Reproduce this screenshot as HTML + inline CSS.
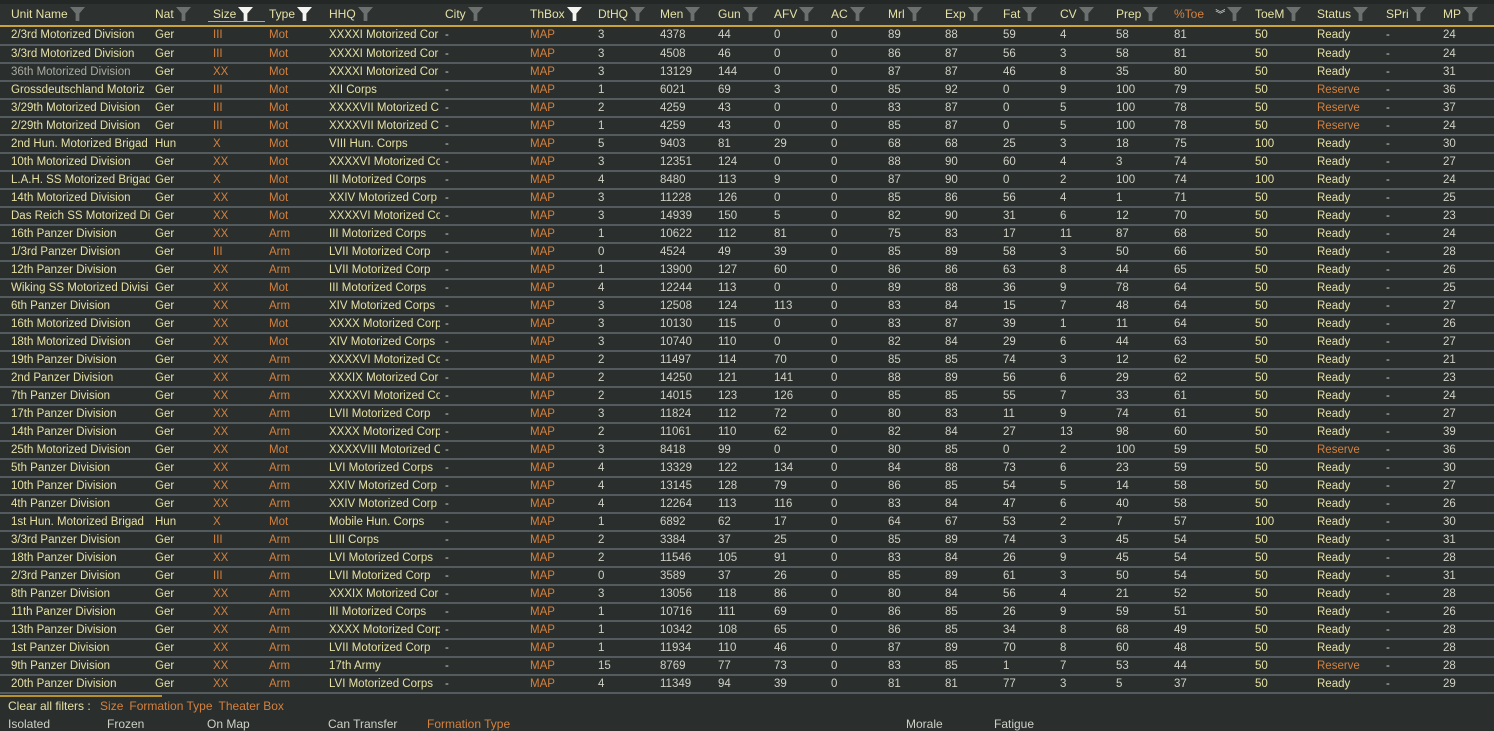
<!DOCTYPE html>
<html><head><meta charset="utf-8">
<style>
*{margin:0;padding:0;box-sizing:border-box}
body{width:1494px;height:730px;overflow:hidden;background:#2a2f2d;font-family:"Liberation Sans",sans-serif;font-size:11.5px;color:#cfd0c6;position:relative}
.top{position:absolute;left:0;top:0;width:1494px;height:5px;background:#232725}
.hdr{position:absolute;left:0;top:4px;width:1494px;height:22px;background:#2d3230}
.gold{position:absolute;left:0;top:25px;width:1494px;height:2px;background:#c9a23a}
.h{position:absolute;top:6px;color:#e6e0a6;font-size:12px;white-space:nowrap}
.h svg{vertical-align:-3px;margin-left:2px}
table{position:absolute;left:0;top:27px;border-collapse:collapse;table-layout:fixed;width:1494px}
td{height:18px;border-bottom:2px solid #535b5e;padding:0 0 0 5px;white-space:nowrap;overflow:hidden;line-height:16px;vertical-align:top}
td:first-child{padding-left:11px;color:#e6e0a6}
td:nth-child(2),td:nth-child(5),td:nth-child(19),td:nth-child(20){color:#e6e0a6}
td:nth-child(3),td:nth-child(4),td:nth-child(7){color:#d4803e}
td.r{color:#d4803e!important}
tr.g td:first-child{color:#a9aaa2}
.foot{position:absolute;left:0;top:695px;width:162px;height:2px;background:#b8902c}
.f1{position:absolute;top:699px;left:8px;color:#e6e0a6;font-size:12px;white-space:nowrap}
.f1 span{color:#d4803e;margin-left:6px}
.f2{position:absolute;top:717px;color:#cfd0c6;font-size:12px;white-space:nowrap}
</style></head><body>
<div class="top"></div><div class="hdr"></div>
<svg width="0" height="0" style="position:absolute"><defs>
<symbol id="fg" viewBox="0 0 16 16"><polygon points="0,1 16,1 10,8 10,16 6,16 6,8" fill="#6c7170"/></symbol>
<symbol id="fw" viewBox="0 0 16 16"><polygon points="0,1 16,1 10,8 10,16 6,16 6,8" fill="#f4f4f0"/></symbol>
</defs></svg>
<div class="h" style="left:11px">Unit Name<svg width="15" height="15"><use href="#fg"/></svg></div>
<div class="h" style="left:155px">Nat<svg width="15" height="15"><use href="#fg"/></svg></div>
<div class="h" style="left:213px">Size<svg width="15" height="15"><use href="#fw"/></svg></div>
<div style="position:absolute;left:208px;top:21px;width:57px;height:1px;background:#8fb0c8"></div>
<div class="h" style="left:269px">Type<svg width="15" height="15"><use href="#fw"/></svg></div>
<div class="h" style="left:329px">HHQ<svg width="15" height="15"><use href="#fg"/></svg></div>
<div class="h" style="left:445px">City<svg width="15" height="15"><use href="#fg"/></svg></div>
<div class="h" style="left:530px">ThBox<svg width="15" height="15"><use href="#fw"/></svg></div>
<div class="h" style="left:598px">DtHQ<svg width="15" height="15"><use href="#fg"/></svg></div>
<div class="h" style="left:660px">Men<svg width="15" height="15"><use href="#fg"/></svg></div>
<div class="h" style="left:718px">Gun<svg width="15" height="15"><use href="#fg"/></svg></div>
<div class="h" style="left:774px">AFV<svg width="15" height="15"><use href="#fg"/></svg></div>
<div class="h" style="left:831px">AC<svg width="15" height="15"><use href="#fg"/></svg></div>
<div class="h" style="left:888px">Mrl<svg width="15" height="15"><use href="#fg"/></svg></div>
<div class="h" style="left:945px">Exp<svg width="15" height="15"><use href="#fg"/></svg></div>
<div class="h" style="left:1003px">Fat<svg width="15" height="15"><use href="#fg"/></svg></div>
<div class="h" style="left:1060px">CV<svg width="15" height="15"><use href="#fg"/></svg></div>
<div class="h" style="left:1116px">Prep<svg width="15" height="15"><use href="#fg"/></svg></div>
<div class="h" style="left:1174px;color:#d4803e">%Toe <span style="color:#eee;font-size:10px;margin-left:8px">︾</span><svg width="15" height="15"><use href="#fg"/></svg></div>
<div class="h" style="left:1255px">ToeM<svg width="15" height="15"><use href="#fg"/></svg></div>
<div class="h" style="left:1317px">Status<svg width="15" height="15"><use href="#fg"/></svg></div>
<div class="h" style="left:1386px">SPri<svg width="15" height="15"><use href="#fg"/></svg></div>
<div class="h" style="left:1443px">MP<svg width="15" height="15"><use href="#fg"/></svg></div>
<div class="gold"></div>
<table>
<colgroup><col style="width:150px"><col style="width:58px"><col style="width:56px"><col style="width:60px"><col style="width:116px"><col style="width:85px"><col style="width:68px"><col style="width:62px"><col style="width:58px"><col style="width:56px"><col style="width:57px"><col style="width:57px"><col style="width:57px"><col style="width:58px"><col style="width:57px"><col style="width:56px"><col style="width:58px"><col style="width:81px"><col style="width:62px"><col style="width:69px"><col style="width:57px"><col style="width:56px"></colgroup>
<tr><td>2/3rd Motorized Division</td><td>Ger</td><td>III</td><td>Mot</td><td>XXXXI Motorized Cor</td><td>-</td><td>MAP</td><td>3</td><td>4378</td><td>44</td><td>0</td><td>0</td><td>89</td><td>88</td><td>59</td><td>4</td><td>58</td><td>81</td><td>50</td><td>Ready</td><td>-</td><td>24</td></tr>
<tr><td>3/3rd Motorized Division</td><td>Ger</td><td>III</td><td>Mot</td><td>XXXXI Motorized Cor</td><td>-</td><td>MAP</td><td>3</td><td>4508</td><td>46</td><td>0</td><td>0</td><td>86</td><td>87</td><td>56</td><td>3</td><td>58</td><td>81</td><td>50</td><td>Ready</td><td>-</td><td>24</td></tr>
<tr class="g"><td>36th Motorized Division</td><td>Ger</td><td>XX</td><td>Mot</td><td>XXXXI Motorized Cor</td><td>-</td><td>MAP</td><td>3</td><td>13129</td><td>144</td><td>0</td><td>0</td><td>87</td><td>87</td><td>46</td><td>8</td><td>35</td><td>80</td><td>50</td><td>Ready</td><td>-</td><td>31</td></tr>
<tr><td>Grossdeutschland Motoriz</td><td>Ger</td><td>III</td><td>Mot</td><td>XII Corps</td><td>-</td><td>MAP</td><td>1</td><td>6021</td><td>69</td><td>3</td><td>0</td><td>85</td><td>92</td><td>0</td><td>9</td><td>100</td><td>79</td><td>50</td><td class="r">Reserve</td><td>-</td><td>36</td></tr>
<tr><td>3/29th Motorized Division</td><td>Ger</td><td>III</td><td>Mot</td><td>XXXXVII Motorized C</td><td>-</td><td>MAP</td><td>2</td><td>4259</td><td>43</td><td>0</td><td>0</td><td>83</td><td>87</td><td>0</td><td>5</td><td>100</td><td>78</td><td>50</td><td class="r">Reserve</td><td>-</td><td>37</td></tr>
<tr><td>2/29th Motorized Division</td><td>Ger</td><td>III</td><td>Mot</td><td>XXXXVII Motorized C</td><td>-</td><td>MAP</td><td>1</td><td>4259</td><td>43</td><td>0</td><td>0</td><td>85</td><td>87</td><td>0</td><td>5</td><td>100</td><td>78</td><td>50</td><td class="r">Reserve</td><td>-</td><td>24</td></tr>
<tr><td>2nd Hun. Motorized Brigad</td><td>Hun</td><td>X</td><td>Mot</td><td>VIII Hun. Corps</td><td>-</td><td>MAP</td><td>5</td><td>9403</td><td>81</td><td>29</td><td>0</td><td>68</td><td>68</td><td>25</td><td>3</td><td>18</td><td>75</td><td>100</td><td>Ready</td><td>-</td><td>30</td></tr>
<tr><td>10th Motorized Division</td><td>Ger</td><td>XX</td><td>Mot</td><td>XXXXVI Motorized Co</td><td>-</td><td>MAP</td><td>3</td><td>12351</td><td>124</td><td>0</td><td>0</td><td>88</td><td>90</td><td>60</td><td>4</td><td>3</td><td>74</td><td>50</td><td>Ready</td><td>-</td><td>27</td></tr>
<tr><td>L.A.H. SS Motorized Brigad</td><td>Ger</td><td>X</td><td>Mot</td><td>III Motorized Corps</td><td>-</td><td>MAP</td><td>4</td><td>8480</td><td>113</td><td>9</td><td>0</td><td>87</td><td>90</td><td>0</td><td>2</td><td>100</td><td>74</td><td>100</td><td>Ready</td><td>-</td><td>24</td></tr>
<tr><td>14th Motorized Division</td><td>Ger</td><td>XX</td><td>Mot</td><td>XXIV Motorized Corp</td><td>-</td><td>MAP</td><td>3</td><td>11228</td><td>126</td><td>0</td><td>0</td><td>85</td><td>86</td><td>56</td><td>4</td><td>1</td><td>71</td><td>50</td><td>Ready</td><td>-</td><td>25</td></tr>
<tr><td>Das Reich SS Motorized Di</td><td>Ger</td><td>XX</td><td>Mot</td><td>XXXXVI Motorized Co</td><td>-</td><td>MAP</td><td>3</td><td>14939</td><td>150</td><td>5</td><td>0</td><td>82</td><td>90</td><td>31</td><td>6</td><td>12</td><td>70</td><td>50</td><td>Ready</td><td>-</td><td>23</td></tr>
<tr><td>16th Panzer Division</td><td>Ger</td><td>XX</td><td>Arm</td><td>III Motorized Corps</td><td>-</td><td>MAP</td><td>1</td><td>10622</td><td>112</td><td>81</td><td>0</td><td>75</td><td>83</td><td>17</td><td>11</td><td>87</td><td>68</td><td>50</td><td>Ready</td><td>-</td><td>24</td></tr>
<tr><td>1/3rd Panzer Division</td><td>Ger</td><td>III</td><td>Arm</td><td>LVII Motorized Corp</td><td>-</td><td>MAP</td><td>0</td><td>4524</td><td>49</td><td>39</td><td>0</td><td>85</td><td>89</td><td>58</td><td>3</td><td>50</td><td>66</td><td>50</td><td>Ready</td><td>-</td><td>28</td></tr>
<tr><td>12th Panzer Division</td><td>Ger</td><td>XX</td><td>Arm</td><td>LVII Motorized Corp</td><td>-</td><td>MAP</td><td>1</td><td>13900</td><td>127</td><td>60</td><td>0</td><td>86</td><td>86</td><td>63</td><td>8</td><td>44</td><td>65</td><td>50</td><td>Ready</td><td>-</td><td>26</td></tr>
<tr><td>Wiking SS Motorized Divisi</td><td>Ger</td><td>XX</td><td>Mot</td><td>III Motorized Corps</td><td>-</td><td>MAP</td><td>4</td><td>12244</td><td>113</td><td>0</td><td>0</td><td>89</td><td>88</td><td>36</td><td>9</td><td>78</td><td>64</td><td>50</td><td>Ready</td><td>-</td><td>25</td></tr>
<tr><td>6th Panzer Division</td><td>Ger</td><td>XX</td><td>Arm</td><td>XIV Motorized Corps</td><td>-</td><td>MAP</td><td>3</td><td>12508</td><td>124</td><td>113</td><td>0</td><td>83</td><td>84</td><td>15</td><td>7</td><td>48</td><td>64</td><td>50</td><td>Ready</td><td>-</td><td>27</td></tr>
<tr><td>16th Motorized Division</td><td>Ger</td><td>XX</td><td>Mot</td><td>XXXX Motorized Corp</td><td>-</td><td>MAP</td><td>3</td><td>10130</td><td>115</td><td>0</td><td>0</td><td>83</td><td>87</td><td>39</td><td>1</td><td>11</td><td>64</td><td>50</td><td>Ready</td><td>-</td><td>26</td></tr>
<tr><td>18th Motorized Division</td><td>Ger</td><td>XX</td><td>Mot</td><td>XIV Motorized Corps</td><td>-</td><td>MAP</td><td>3</td><td>10740</td><td>110</td><td>0</td><td>0</td><td>82</td><td>84</td><td>29</td><td>6</td><td>44</td><td>63</td><td>50</td><td>Ready</td><td>-</td><td>27</td></tr>
<tr><td>19th Panzer Division</td><td>Ger</td><td>XX</td><td>Arm</td><td>XXXXVI Motorized Co</td><td>-</td><td>MAP</td><td>2</td><td>11497</td><td>114</td><td>70</td><td>0</td><td>85</td><td>85</td><td>74</td><td>3</td><td>12</td><td>62</td><td>50</td><td>Ready</td><td>-</td><td>21</td></tr>
<tr><td>2nd Panzer Division</td><td>Ger</td><td>XX</td><td>Arm</td><td>XXXIX Motorized Cor</td><td>-</td><td>MAP</td><td>2</td><td>14250</td><td>121</td><td>141</td><td>0</td><td>88</td><td>89</td><td>56</td><td>6</td><td>29</td><td>62</td><td>50</td><td>Ready</td><td>-</td><td>23</td></tr>
<tr><td>7th Panzer Division</td><td>Ger</td><td>XX</td><td>Arm</td><td>XXXXVI Motorized Co</td><td>-</td><td>MAP</td><td>2</td><td>14015</td><td>123</td><td>126</td><td>0</td><td>85</td><td>85</td><td>55</td><td>7</td><td>33</td><td>61</td><td>50</td><td>Ready</td><td>-</td><td>24</td></tr>
<tr><td>17th Panzer Division</td><td>Ger</td><td>XX</td><td>Arm</td><td>LVII Motorized Corp</td><td>-</td><td>MAP</td><td>3</td><td>11824</td><td>112</td><td>72</td><td>0</td><td>80</td><td>83</td><td>11</td><td>9</td><td>74</td><td>61</td><td>50</td><td>Ready</td><td>-</td><td>27</td></tr>
<tr><td>14th Panzer Division</td><td>Ger</td><td>XX</td><td>Arm</td><td>XXXX Motorized Corp</td><td>-</td><td>MAP</td><td>2</td><td>11061</td><td>110</td><td>62</td><td>0</td><td>82</td><td>84</td><td>27</td><td>13</td><td>98</td><td>60</td><td>50</td><td>Ready</td><td>-</td><td>39</td></tr>
<tr><td>25th Motorized Division</td><td>Ger</td><td>XX</td><td>Mot</td><td>XXXXVIII Motorized C</td><td>-</td><td>MAP</td><td>3</td><td>8418</td><td>99</td><td>0</td><td>0</td><td>80</td><td>85</td><td>0</td><td>2</td><td>100</td><td>59</td><td>50</td><td class="r">Reserve</td><td>-</td><td>36</td></tr>
<tr><td>5th Panzer Division</td><td>Ger</td><td>XX</td><td>Arm</td><td>LVI Motorized Corps</td><td>-</td><td>MAP</td><td>4</td><td>13329</td><td>122</td><td>134</td><td>0</td><td>84</td><td>88</td><td>73</td><td>6</td><td>23</td><td>59</td><td>50</td><td>Ready</td><td>-</td><td>30</td></tr>
<tr><td>10th Panzer Division</td><td>Ger</td><td>XX</td><td>Arm</td><td>XXIV Motorized Corp</td><td>-</td><td>MAP</td><td>4</td><td>13145</td><td>128</td><td>79</td><td>0</td><td>86</td><td>85</td><td>54</td><td>5</td><td>14</td><td>58</td><td>50</td><td>Ready</td><td>-</td><td>27</td></tr>
<tr><td>4th Panzer Division</td><td>Ger</td><td>XX</td><td>Arm</td><td>XXIV Motorized Corp</td><td>-</td><td>MAP</td><td>4</td><td>12264</td><td>113</td><td>116</td><td>0</td><td>83</td><td>84</td><td>47</td><td>6</td><td>40</td><td>58</td><td>50</td><td>Ready</td><td>-</td><td>26</td></tr>
<tr><td>1st Hun. Motorized Brigad</td><td>Hun</td><td>X</td><td>Mot</td><td>Mobile Hun. Corps</td><td>-</td><td>MAP</td><td>1</td><td>6892</td><td>62</td><td>17</td><td>0</td><td>64</td><td>67</td><td>53</td><td>2</td><td>7</td><td>57</td><td>100</td><td>Ready</td><td>-</td><td>30</td></tr>
<tr><td>3/3rd Panzer Division</td><td>Ger</td><td>III</td><td>Arm</td><td>LIII Corps</td><td>-</td><td>MAP</td><td>2</td><td>3384</td><td>37</td><td>25</td><td>0</td><td>85</td><td>89</td><td>74</td><td>3</td><td>45</td><td>54</td><td>50</td><td>Ready</td><td>-</td><td>31</td></tr>
<tr><td>18th Panzer Division</td><td>Ger</td><td>XX</td><td>Arm</td><td>LVI Motorized Corps</td><td>-</td><td>MAP</td><td>2</td><td>11546</td><td>105</td><td>91</td><td>0</td><td>83</td><td>84</td><td>26</td><td>9</td><td>45</td><td>54</td><td>50</td><td>Ready</td><td>-</td><td>28</td></tr>
<tr><td>2/3rd Panzer Division</td><td>Ger</td><td>III</td><td>Arm</td><td>LVII Motorized Corp</td><td>-</td><td>MAP</td><td>0</td><td>3589</td><td>37</td><td>26</td><td>0</td><td>85</td><td>89</td><td>61</td><td>3</td><td>50</td><td>54</td><td>50</td><td>Ready</td><td>-</td><td>31</td></tr>
<tr><td>8th Panzer Division</td><td>Ger</td><td>XX</td><td>Arm</td><td>XXXIX Motorized Cor</td><td>-</td><td>MAP</td><td>3</td><td>13056</td><td>118</td><td>86</td><td>0</td><td>80</td><td>84</td><td>56</td><td>4</td><td>21</td><td>52</td><td>50</td><td>Ready</td><td>-</td><td>28</td></tr>
<tr><td>11th Panzer Division</td><td>Ger</td><td>XX</td><td>Arm</td><td>III Motorized Corps</td><td>-</td><td>MAP</td><td>1</td><td>10716</td><td>111</td><td>69</td><td>0</td><td>86</td><td>85</td><td>26</td><td>9</td><td>59</td><td>51</td><td>50</td><td>Ready</td><td>-</td><td>26</td></tr>
<tr><td>13th Panzer Division</td><td>Ger</td><td>XX</td><td>Arm</td><td>XXXX Motorized Corp</td><td>-</td><td>MAP</td><td>1</td><td>10342</td><td>108</td><td>65</td><td>0</td><td>86</td><td>85</td><td>34</td><td>8</td><td>68</td><td>49</td><td>50</td><td>Ready</td><td>-</td><td>28</td></tr>
<tr><td>1st Panzer Division</td><td>Ger</td><td>XX</td><td>Arm</td><td>LVII Motorized Corp</td><td>-</td><td>MAP</td><td>1</td><td>11934</td><td>110</td><td>46</td><td>0</td><td>87</td><td>89</td><td>70</td><td>8</td><td>60</td><td>48</td><td>50</td><td>Ready</td><td>-</td><td>28</td></tr>
<tr><td>9th Panzer Division</td><td>Ger</td><td>XX</td><td>Arm</td><td>17th Army</td><td>-</td><td>MAP</td><td>15</td><td>8769</td><td>77</td><td>73</td><td>0</td><td>83</td><td>85</td><td>1</td><td>7</td><td>53</td><td>44</td><td>50</td><td class="r">Reserve</td><td>-</td><td>28</td></tr>
<tr><td>20th Panzer Division</td><td>Ger</td><td>XX</td><td>Arm</td><td>LVI Motorized Corps</td><td>-</td><td>MAP</td><td>4</td><td>11349</td><td>94</td><td>39</td><td>0</td><td>81</td><td>81</td><td>77</td><td>3</td><td>5</td><td>37</td><td>50</td><td>Ready</td><td>-</td><td>29</td></tr>
</table>
<div class="foot"></div>
<div class="f1">Clear all filters : <span>Size</span><span>Formation Type</span><span>Theater Box</span></div>
<div class="f2" style="left:8px">Isolated</div>
<div class="f2" style="left:107px">Frozen</div>
<div class="f2" style="left:207px">On Map</div>
<div class="f2" style="left:328px">Can Transfer</div>
<div class="f2" style="left:427px;color:#d4803e">Formation Type</div>
<div class="f2" style="left:906px">Morale</div>
<div class="f2" style="left:994px">Fatigue</div>
</body></html>
